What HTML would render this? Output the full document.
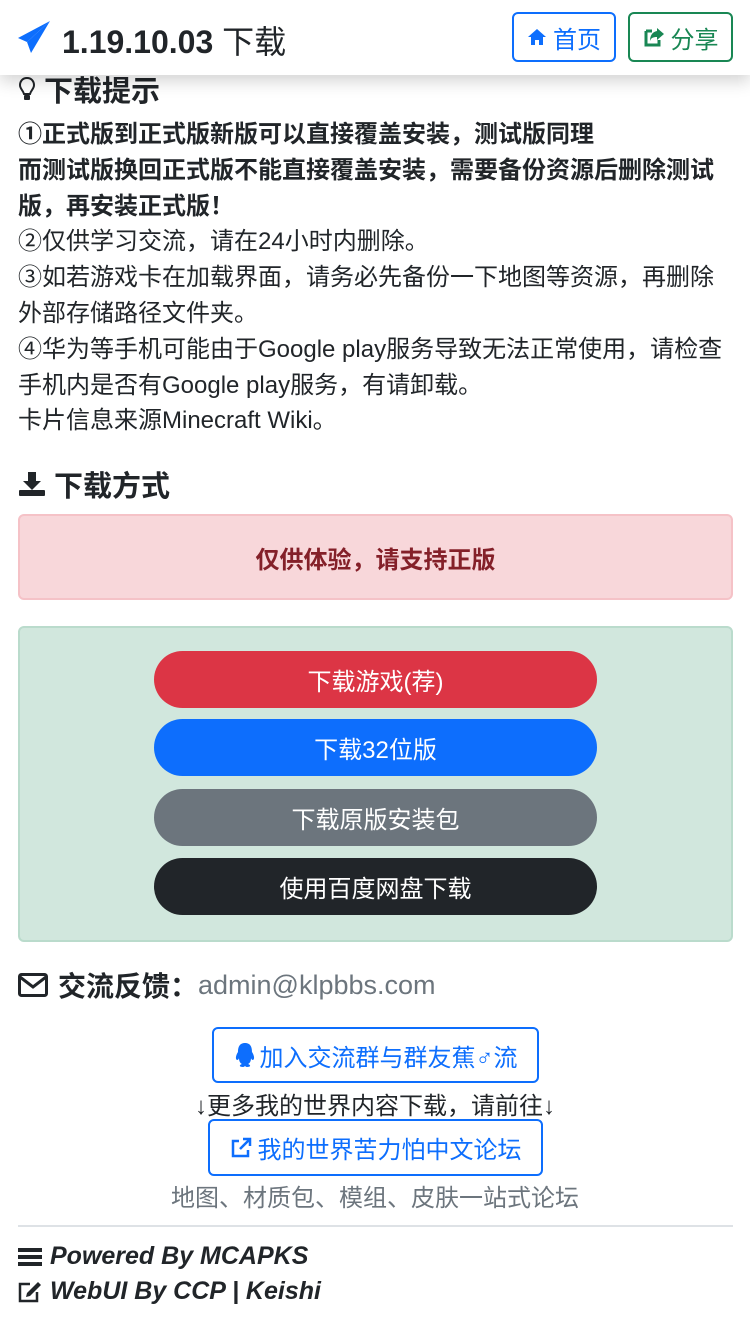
<!DOCTYPE html>
<html><head><meta charset="utf-8"><style>
*{box-sizing:border-box;margin:0;padding:0}
body{width:750px;height:1334px;overflow:hidden;background:#fff;font-family:"Liberation Sans","Noto Sans CJK SC",sans-serif;color:#212529;position:relative}
.ab{position:absolute}
.hdr{left:0;top:0;width:750px;height:75px;background:#fff;box-shadow:0 6px 16px rgba(0,0,0,.18);z-index:5}
.btn{position:absolute;border:2px solid;border-radius:6px;display:flex;align-items:center;justify-content:center;font-size:24px;gap:6px}
.t{font-size:24px;line-height:35.8px;left:18px;width:716px}
.pill{position:absolute;left:154px;width:443px;height:57px;border-radius:29px;color:#fff;font-size:24px;display:flex;align-items:center;justify-content:center}
h2{position:absolute;font-size:29px;font-weight:bold;left:18px;display:flex;align-items:center;gap:8px}
</style></head><body>
<div class="ab" style="left:25px;top:0;width:268px;height:15px;background:#f2f2f2"></div>
<div class="ab hdr">
<svg class="ab" style="left:17px;top:20px" width="34" height="34" viewBox="0 0 34 34"><path d="M33 1 L1 18 L10 22 Z" fill="#0d6efd"/><path d="M33 1 L10 22 L14 33 Z" fill="#0d6efd"/></svg>
<div class="ab" style="left:62px;top:17px;font-size:32px;font-weight:bold;white-space:nowrap">1.19.10.03 <span style="font-weight:normal">下载</span></div>
<div class="btn" style="left:512px;top:12px;width:104px;height:50px;border-color:#0d6efd;color:#0d6efd"><svg width="20" height="20" viewBox="0 0 20 20"><path d="M10 2 L1 10 H4 V18 H8 V13 H12 V18 H16 V10 H19 Z" fill="#0d6efd"/></svg>首页</div>
<div class="btn" style="left:628px;top:12px;width:105px;height:50px;border-color:#198754;color:#198754"><svg width="22" height="22" viewBox="0 0 22 22"><path d="M3 5 H9 M3 5 V19 H16 V14" stroke="#198754" stroke-width="3" fill="none"/><path d="M14 2 L21 8 L14 14 V11 C10 11 8 12 7 15 C7 10 9 6 14 5 Z" fill="#198754"/></svg>分享</div>
</div>
<h2 style="top:68px"><svg width="18" height="26" viewBox="0 0 18 26"><path d="M9 2 C4 2 2 6 2 9 C2 13 5 14 6 18 H12 C13 14 16 13 16 9 C16 6 14 2 9 2 Z" stroke="#212529" stroke-width="2" fill="none"/><rect x="6" y="19" width="6" height="5" rx="1" fill="#212529"/></svg>下载提示</h2>
<div class="ab t" style="top:117px"><b>①正式版到正式版新版可以直接覆盖安装，测试版同理<br>而测试版换回正式版不能直接覆盖安装，需要备份资源后删除测试版，再安装正式版！</b><br>②仅供学习交流，请在24小时内删除。<br>③如若游戏卡在加载界面，请务必先备份一下地图等资源，再删除外部存储路径文件夹。<br>④华为等手机可能由于Google play服务导致无法正常使用，请检查手机内是否有Google play服务，有请卸载。<br>卡片信息来源Minecraft Wiki。</div>
<h2 style="top:463px"><svg width="28" height="26" viewBox="0 0 28 26"><path d="M10 1 H18 V10 H23 L14 19 L5 10 H10 Z" fill="#212529"/><rect x="1" y="19" width="26" height="6" rx="1" fill="#212529"/></svg>下载方式</h2>
<div class="ab" style="left:18px;top:514px;width:715px;height:86px;background:#f8d7da;border:2px solid #f5c2c7;border-radius:6px;color:#842029;font-weight:bold;font-size:24px;display:flex;align-items:center;justify-content:center">仅供体验，请支持正版</div>
<div class="ab" style="left:18px;top:626px;width:715px;height:316px;background:#d1e7dd;border:2px solid #badbcc;border-radius:6px"></div>
<div class="pill" style="top:651px;background:#dc3545">下载游戏(荐)</div>
<div class="pill" style="top:719px;background:#0d6efd">下载32位版</div>
<div class="pill" style="top:789px;background:#6c757d">下载原版安装包</div>
<div class="pill" style="top:858px;background:#212529">使用百度网盘下载</div>
<div class="ab" style="left:18px;top:965px;font-size:28px;white-space:nowrap;display:flex;align-items:center"><svg width="30" height="24" viewBox="0 0 30 24" style="margin-right:10px"><rect x="1.5" y="1.5" width="27" height="21" rx="2" stroke="#212529" stroke-width="3" fill="none"/><path d="M2 4 L15 14 L28 4" stroke="#212529" stroke-width="3" fill="none"/></svg><b>交流反馈：</b><span style="color:#6c757d;font-size:27px">admin@klpbbs.com</span></div>
<div class="btn" style="left:212px;top:1027px;width:327px;height:56px;border-color:#0d6efd;color:#0d6efd;font-size:24px;gap:4px"><svg width="22" height="26" viewBox="0 0 22 26"><path d="M11 1 C5 1 4 6 4 10 C2 13 1 17 3 18 C4 18 5 17 5 16 C5 19 6 21 8 22 C5 23 5 25 9 25 C10 25 11 24 11 24 C11 24 12 25 13 25 C17 25 17 23 14 22 C16 21 17 19 17 16 C17 17 18 18 19 18 C21 17 20 13 18 10 C18 6 17 1 11 1 Z" fill="#0d6efd"/></svg>加入交流群与群友蕉♂流</div>
<div class="ab" style="left:0;width:750px;top:1086px;text-align:center;font-size:24px">↓更多我的世界内容下载，请前往↓</div>
<div class="btn" style="left:208px;top:1119px;width:335px;height:57px;border-color:#0d6efd;color:#0d6efd;font-size:24px"><svg width="22" height="22" viewBox="0 0 22 22"><path d="M9 4 H3 V19 H18 V13" stroke="#0d6efd" stroke-width="2.5" fill="none"/><path d="M13 2 H20 V9 M20 2 L10 12" stroke="#0d6efd" stroke-width="2.5" fill="none"/></svg>我的世界苦力怕中文论坛</div>
<div class="ab" style="left:0;width:750px;top:1178px;text-align:center;font-size:24px;color:#6c757d">地图、材质包、模组、皮肤一站式论坛</div>
<div class="ab" style="left:18px;top:1225px;width:715px;height:2px;background:#dee2e6"></div>
<div class="ab" style="left:18px;top:1239px;font-size:25px;font-weight:bold;font-style:italic;line-height:35px">
<div style="display:flex;align-items:center;gap:8px"><svg width="24" height="20" viewBox="0 0 24 20"><rect x="0" y="1" width="24" height="4" fill="#212529"/><rect x="0" y="8" width="24" height="4" fill="#212529"/><rect x="0" y="15" width="24" height="4" fill="#212529"/></svg>Powered By MCAPKS</div>
<div style="display:flex;align-items:center;gap:8px"><svg width="24" height="22" viewBox="0 0 24 22"><path d="M12 3 H2 V20 H19 V11" stroke="#212529" stroke-width="2.5" fill="none"/><path d="M20 1 L23 4 L12 15 L8 16 L9 12 Z" fill="#212529"/></svg>WebUI By CCP | Keishi</div>
</div>
</body></html>
